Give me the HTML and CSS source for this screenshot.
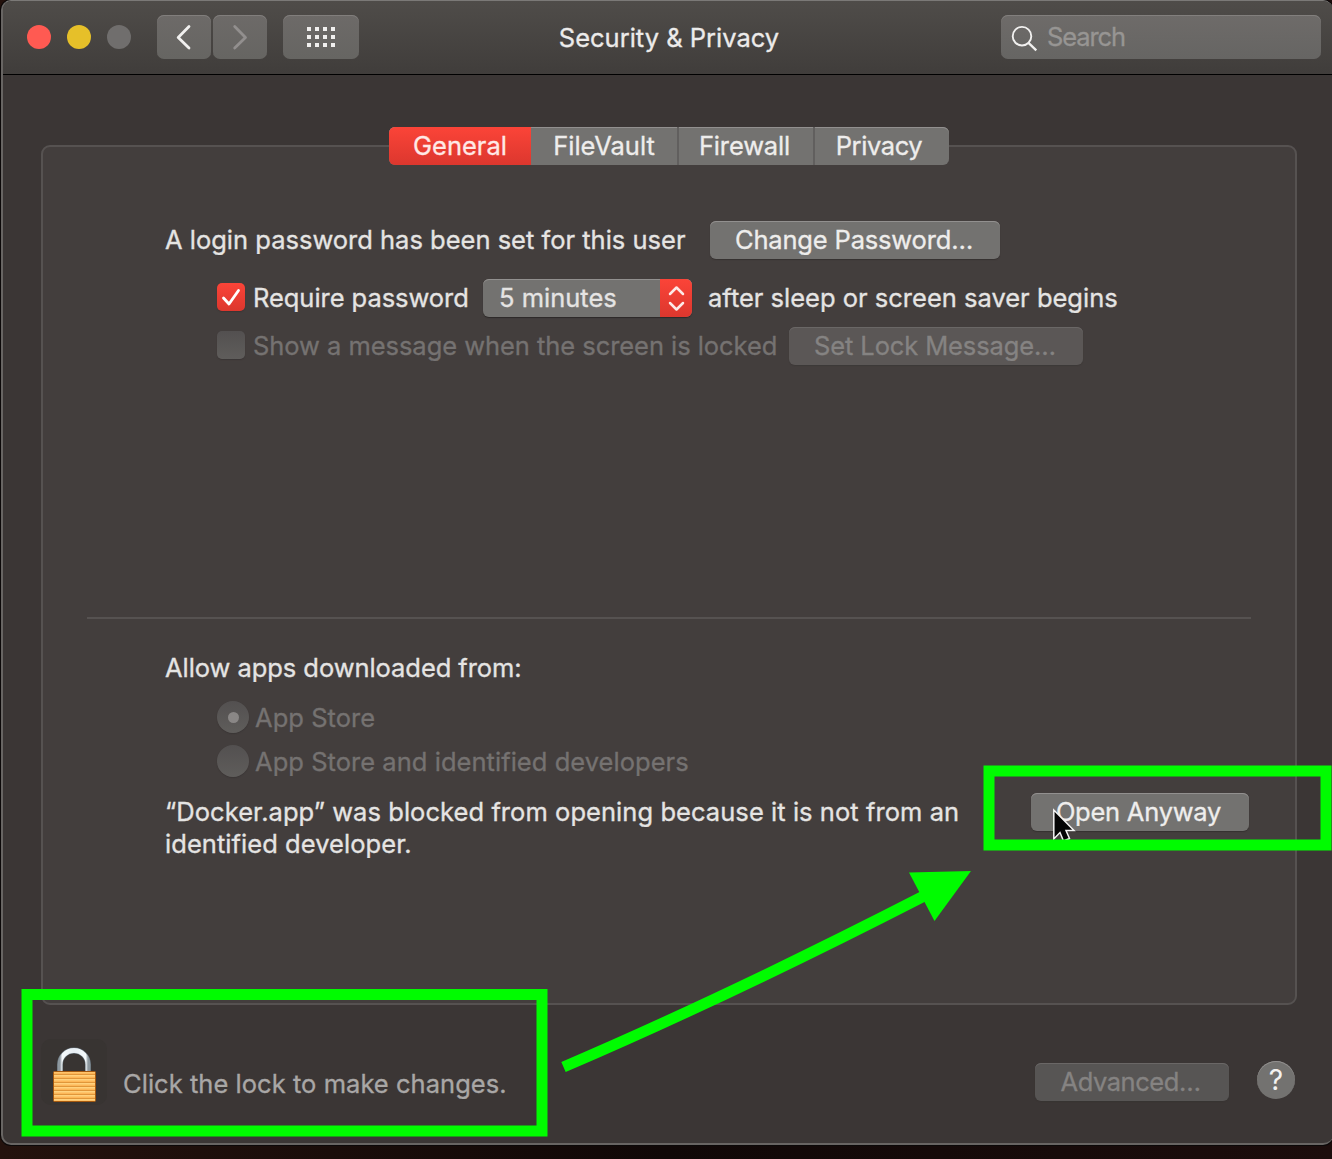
FILE: index.html
```html
<!DOCTYPE html>
<html lang="en">
<head>
<meta charset="utf-8">
<title>Security &amp; Privacy</title>
<link rel="stylesheet" href="styles.css">
</head>
<body>
<div class="window">
  <header class="toolbar">
    <div class="lights"><span class="light close"></span><span class="light minimize"></span><span class="light zoom"></span></div>
    <div class="nav">
      <button class="tool"><svg width="54" height="44" viewBox="0 0 54 44"><path d="M32 11.500 21.200 22.500 32 33" fill="none" stroke="#f1f0ef" stroke-width="2.800" stroke-linecap="round" stroke-linejoin="round"/></svg></button>
      <button class="tool"><svg width="54" height="44" viewBox="0 0 54 44"><path d="M21.700 11.500 32.500 22.500 21.700 33" fill="none" stroke="#928f8e" stroke-width="2.800" stroke-linecap="round" stroke-linejoin="round"/></svg></button>
    </div>
    <button class="tool all"><svg width="76" height="44" viewBox="0 0 76 44"><path d="M24 14h28M24 22h28M24 30h28" stroke="#f1f0ef" stroke-width="4" stroke-dasharray="4 4"/></svg></button>
    <h1 class="title"><span class="t">Security &amp; Privacy</span></h1>
    <div class="search">
      <svg width="28" height="28" viewBox="0 0 28 28"><circle cx="11" cy="11.200" r="9.300" fill="none" stroke="#f1f0ef" stroke-width="1.900"/><path d="m17.500 17.800 7.800 7.500" stroke="#f1f0ef" stroke-width="2.300"/></svg>
      <span class="t search-text">Search</span>
    </div>
  </header>

  <nav class="tabs">
    <span class="tab active"><span class="t">General</span></span>
    <span class="tab vault"><span class="t">FileVault</span></span>
    <span class="tab fire"><span class="t">Firewall</span></span>
    <span class="tab priv"><span class="t">Privacy</span></span>
  </nav>

  <main class="panel">
    <div class="row login"><span class="t">A login password has been set for this user</span><button class="btn change"><span class="t">Change Password…</span></button></div>
    <div class="row require">
      <span class="check on"><svg width="28" height="28" viewBox="0 0 28 28"><path d="M6.500 15 12 21 21.500 7.500" fill="none" stroke="#fff" stroke-width="2.800" stroke-linecap="round" stroke-linejoin="round"/></svg></span>
      <span class="t label">Require password</span>
      <span class="select"><span class="t">5 minutes</span><span class="stepper"><svg width="32" height="38" viewBox="0 0 32 38"><path d="M10 15l6.500-6.500L23 15M10 24l6.500 6.500L23 24" fill="none" stroke="#fde9e7" stroke-width="2.500" stroke-linecap="round" stroke-linejoin="round"/></svg></span></span>
      <span class="t">after sleep or screen saver begins</span>
    </div>
    <div class="row message off">
      <span class="check"></span>
      <span class="t label">Show a message when the screen is locked</span>
      <button class="btn disabled lockmsg"><span class="t">Set Lock Message…</span></button>
    </div>
    <hr class="divider">
    <div class="row allow"><span class="t">Allow apps downloaded from:</span></div>
    <div class="row radio-row off"><span class="radio selected"></span><span class="t">App Store</span></div>
    <div class="row radio-row off second"><span class="radio"></span><span class="t">App Store and identified developers</span></div>
    <div class="blocked">
      <p class="notice"><span class="t">“Docker.app” was blocked from opening because it is not from an</span><br><span class="t">identified developer.</span></p>
      <button class="btn open"><span class="t">Open Anyway</span></button>
    </div>
  </main>

  <footer class="footer">
    <span class="lock"><svg width="66" height="66" viewBox="0 0 66 66">
      <defs><linearGradient id="steel" x1="0" x2="1"><stop offset="0" stop-color="#8d989f"/><stop offset=".08" stop-color="#f5fafc"/><stop offset=".5" stop-color="#e6edf2"/><stop offset=".92" stop-color="#f5fafc"/><stop offset="1" stop-color="#8d989f"/></linearGradient>
      <pattern id="brass" width="43" height="4" patternUnits="userSpaceOnUse" y="32"><rect width="43" height="4" fill="#fdb758"/><rect width="43" height="1.500" fill="#ffd27e"/><rect y="3" width="43" height="1" fill="#e0963a"/></pattern></defs>
      <path d="M19 34V25.500a14 14 0 0 1 28 0V34" fill="none" stroke="#66727b" stroke-width="5.800"/>
      <path d="M19 34V25.500a14 14 0 0 1 28 0V34" fill="none" stroke="url(#steel)" stroke-width="4.800"/>
      <rect x="12.500" y="32.500" width="42" height="30" rx="1" fill="url(#brass)" stroke="#a5590f"/>
    </svg></span>
    <span class="t hint">Click the lock to make changes.</span>
    <button class="btn disabled advanced"><span class="t">Advanced…</span></button>
    <button class="help">?</button>
  </footer>
</div>

<svg class="annotations" width="1332" height="1159" viewBox="0 0 1332 1159">
  <path d="M1053.800 810v29l6.200-6.500 3.500 8.500 6-2.500-3.500-8h8z" fill="#050505" stroke="#f4f4f4" stroke-width="1.500"/>
  <g fill="none" stroke="#00fc00" stroke-width="11">
    <rect x="989" y="771" width="337" height="74"/>
    <rect x="27" y="994.500" width="515" height="136.500"/>
    <path d="M563.500 1067Q727 997 924 896"/>
  </g>
  <path d="M909 872.500 971 871 934.500 921z" fill="#00fc00"/>
</svg>
</body>
</html>
```
FILE: styles.css
```css
* { box-sizing: border-box; }
body { margin: 0; width: 1332px; height: 1159px; overflow: hidden; background: linear-gradient(90deg, #24120d, #100807 50%, #1c0d0c); font: 400 25.5px/38px Inter, "Liberation Sans", sans-serif; color: #e5e4e3; }
button { font: inherit; color: inherit; border: 0; padding: 0; margin: 0; }
svg { display: block; }
.t { white-space: nowrap; -webkit-text-stroke: .3px currentColor; }
.window { width: 1332px; height: 1145px; margin-left: 1px; border: 2px solid #686563; border-right-width: 0; border-top: 1px solid #7b7977; border-radius: 10px; background: #3b3635; box-shadow: 0 0 0 1px #0b0808; display: flex; flex-direction: column; overflow: hidden; }

.toolbar { flex: none; height: 74px; display: flex; align-items: flex-start; padding: 14px 12px 0 24px; background: linear-gradient(#4f4c49, #403d3b); border-bottom: 1px solid #000; }
.lights { display: flex; gap: 16px; padding-top: 10px; }
.light { width: 24px; height: 24px; border-radius: 50%; }
.close { background: #ff5a52; }
.minimize { background: #e6c029; }
.zoom { background: #706e6d; }
.nav { display: flex; gap: 2px; margin-left: 26px; }
.tool { width: 54px; height: 44px; border-radius: 7px; background: linear-gradient(#6d6a68, #666562); box-shadow: inset 0 1px #817e7c; }
.all { width: 76px; margin-left: 16px; }
.title { flex: 1; margin: 0; padding-right: 22px; font-size: 25.5px; font-weight: 400; line-height: 46px; text-align: center; color: #ecebea; }
.search { width: 320px; height: 44px; border-radius: 7px; background: linear-gradient(#6e6b69, #666563); box-shadow: inset 0 1px #827f7d; display: flex; padding: 10px 0 0 10px; gap: 8px; }
.search-text { line-height: 24px; color: #979593; letter-spacing: -1.1px; }

.tabs { flex: none; width: 560px; height: 38px; margin: 52px 0 0 386px; display: flex; border-radius: 6px; background: #737270; overflow: hidden; box-shadow: inset 0 1px #92908f; position: relative; z-index: 1; }
.tab { text-align: center; color: #eeedec; border-right: 2px solid #615f5e; }
.active { width: 142px; border: 0; background: linear-gradient(#fb4438, #dc372e); color: #ffe9e6; }
.vault { width: 148px; }
.fire { width: 136px; letter-spacing: -.15px; padding-right: 3px; }
.priv { width: 134px; border: 0; letter-spacing: -.4px; padding-right: 6px; }

.panel { flex: none; width: 1256px; height: 860px; margin: -20px 0 0 38px; border: 2px solid #565251; border-radius: 9px; background: #433e3d; padding: 74px 44px 0; }
.row { height: 38px; display: flex; align-items: center; }
.btn { height: 38px; border-radius: 6px; background: #737270; color: #eeedec; text-align: center; box-shadow: inset 0 1px #92908f, 0 1px 1px #2d292899; }
.disabled { background: #5b5756; color: #858382; box-shadow: inset 0 1px #6a6766, 0 1px 1px #35313066; }
.login { padding: 0 251px 0 78px; justify-content: space-between; }
.change { width: 290px; letter-spacing: -.17px; padding-right: 2px; }
.require { margin-top: 20px; padding-left: 130px; }
.check { width: 28px; height: 28px; margin-top: -2px; border-radius: 5px; background: linear-gradient(#535050, #5f5d5b); box-shadow: 0 1px 1px #35313099; }
.on { background: linear-gradient(#fb4438, #dc372e); }
.label { width: 230px; margin-left: 8px; letter-spacing: -.05px; }
.select { width: 209px; height: 38px; margin-right: 16px; display: flex; justify-content: space-between; padding-left: 16px; border-radius: 6px; background: #737270; box-shadow: inset 0 1px #92908f, 0 1px 1px #2d2928; overflow: hidden; }
.stepper { width: 32px; background: linear-gradient(#fb4438, #dc372e); }
.message { margin-top: 10px; padding-left: 130px; }
.message .label { width: 536px; }
.off { color: #757271; }
.lockmsg { width: 294px; letter-spacing: -.12px; padding-right: 2px; }
.divider { width: 1164px; height: 2px; margin: 252px 0 0; border: 0; background: #565251; }
.allow { margin-top: 30px; padding-left: 78px; letter-spacing: -.06px; }
.radio-row { margin-top: 12px; padding-left: 130px; gap: 6px; letter-spacing: .04px; }
.second { margin-top: 6px; }
.radio { width: 32px; height: 32px; margin-top: -2px; border-radius: 50%; background: linear-gradient(#535050, #5f5d5b); box-shadow: 0 1px 1px #35313099; display: grid; place-items: center; }
.selected::after { content: ""; width: 11px; height: 11px; border-radius: 50%; background: #8a8786; }
.blocked { display: flex; justify-content: space-between; padding: 12px 2px 0 78px; }
.notice { margin: 3px 0 0; line-height: 32px; letter-spacing: .055px; }
.open { width: 218px; letter-spacing: -.25px; padding-right: 3px; }

.footer { display: flex; padding: 34px 38px 0 38px; }
.lock { width: 66px; height: 66px; border-radius: 10px; background: #383432; }
.hint { margin: 26px 0 0 16px; color: #a9a7a6; letter-spacing: .04px; }
.advanced { width: 194px; margin: 24px 28px 0 auto; background: #575554; letter-spacing: -.45px; padding-right: 3px; }
.help { width: 38px; height: 38px; margin-top: 22px; border-radius: 50%; background: #737270; color: #f3f2f1; font-size: 28px; box-shadow: inset 0 1px #92908f; }
.annotations { position: absolute; left: 0; top: 0; }
```
